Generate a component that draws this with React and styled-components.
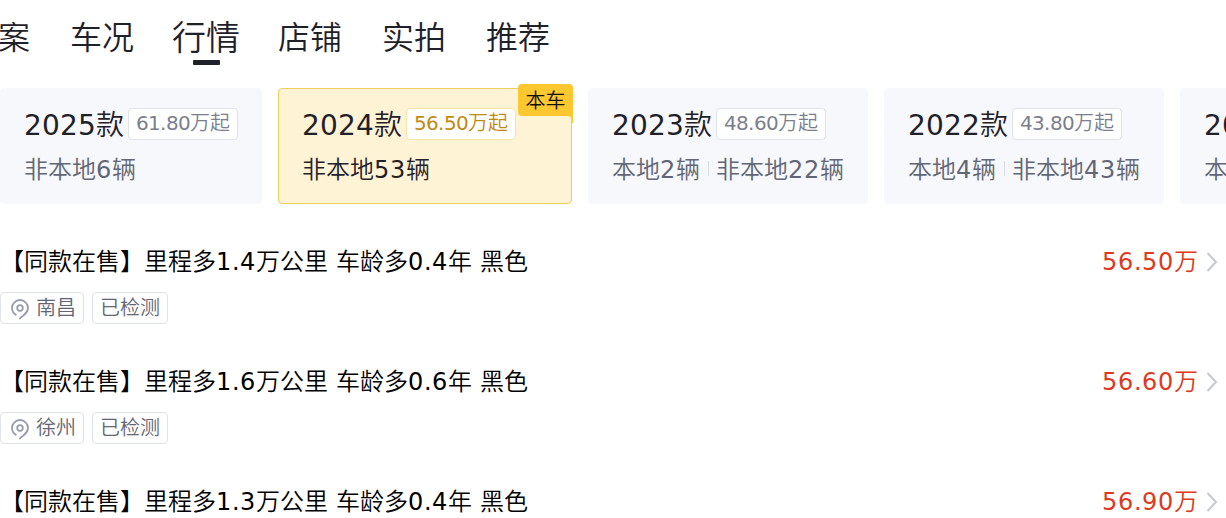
import React from "react";
import styled, { createGlobalStyle, css } from "styled-components";

const GlobalStyles = createGlobalStyle`
  * {
    box-sizing: border-box;
  }
  body {
    margin: 0;
    overflow: hidden;
    background: #fff;
    color: #1f2129;
    font-family: "DejaVu Sans", "Noto Sans CJK SC", sans-serif;
    font-weight: 350;
  }
`;

const PageStyles = styled.div`
  width: 100%;
  height: 518px;
  overflow: hidden;
`;

const TabBar = styled.nav`
  display: flex;
  gap: 40px;
  height: 88px;
  margin-left: -34px;
`;

const Tab = styled.div`
  flex-shrink: 0;
  display: flex;
  flex-direction: column;
  align-items: center;
  width: 64px;
  padding-top: 16px;
  font-size: 32px;
  line-height: 45px;
  white-space: nowrap;
  ${(props) =>
    props.$active &&
    css`
      font-size: 34px;
      &::after {
        content: "";
        width: 27px;
        height: 5px;
        margin-top: -1px;
        border-radius: 1px;
        background: #1f2129;
      }
    `}
`;

const YearList = styled.div`
  display: flex;
  gap: 16px;
`;

const YearCard = styled.div`
  position: relative;
  flex-shrink: 0;
  height: 116px;
  padding: 20px 24px 0;
  border-radius: 4px;
  background: #f6f8fc;
  color: #626675;
  ${(props) =>
    props.$current &&
    css`
      padding: 19px 55px 0 23px;
      border: 1px solid #edcf5c;
      background: #fff3d6;
      color: #1f2129;
    `}
`;

const YearHead = styled.div`
  display: flex;
  gap: 4px;
  height: 34px;
`;

const YearTitle = styled.div`
  color: #1f2129;
  font-size: 28px;
  line-height: 36px;
  white-space: nowrap;
`;

const PriceTag = styled.div`
  height: 32px;
  padding: 0 7px;
  border: 1px solid ${(props) => (props.$current ? "#f5e3a8" : "#dfe2ea")};
  border-radius: 4px;
  background: #fff;
  color: ${(props) => (props.$current ? "#c18a13" : "#7b7f8d")};
  font-size: 20px;
  line-height: 28px;
  white-space: nowrap;
`;

const YearCounts = styled.div`
  display: flex;
  align-items: center;
  margin-top: 11px;
  font-size: 24px;
  line-height: 34px;
  white-space: nowrap;
`;

const Divider = styled.i`
  width: 1px;
  height: 15px;
  margin: 0 7px 4px 8px;
  background: #d9dce3;
`;

const Corner = styled.div`
  position: absolute;
  top: -5px;
  right: -2px;
  width: 55px;
  height: 32px;
  border-radius: 4px 4px 0 4px;
  background: #fdc72f;
  color: #111;
  font-size: 20px;
  line-height: 34px;
  text-align: center;
  svg {
    position: absolute;
    top: 32px;
    right: 0;
  }
`;

const CarRow = styled.div`
  height: 120px;
`;

const CarHead = styled.div`
  display: flex;
  align-items: center;
  height: 36px;
  padding-right: 7px;
  color: #000;
  font-size: 24px;
  line-height: 36px;
  white-space: nowrap;
`;

const CarPrice = styled.div`
  margin-left: auto;
  margin-right: 8px;
  color: #dc3b20;
`;

const TagList = styled.div`
  display: flex;
  gap: 8px;
  margin-top: 12px;
`;

const Tag = styled.div`
  display: flex;
  align-items: center;
  height: 32px;
  padding: 0 7px;
  border: 1px solid #dfe2ea;
  border-radius: 4px;
  color: #626675;
  font-size: 20px;
  line-height: 30px;
  svg {
    margin: 2px 7px 0 3px;
  }
`;

const CarList = styled.div`
  padding-top: 40px;
`;

const Digits = styled.span`
  font-weight: 400;
  letter-spacing: ${(props) => props.$gap}px;
`;

// advance corrections for digits and for dots/spaces, keyed by font size
const GAPS = {
  20: [-0.727, -0.357],
  24: [0.73, 0.37],
  28: [0.185, 0],
};

const Text = ({ size, children }) =>
  children.split(/(\d+|[. ])/).map((part, index) => {
    if (!/^[\d. ]/.test(part)) return part;
    const gap = GAPS[size][/\d/.test(part) ? 0 : 1];
    return (
      <Digits key={index} $gap={gap}>
        {part}
      </Digits>
    );
  });

const PinIcon = () => (
  <svg width="18" height="21" viewBox="0 0 18 21" fill="none" stroke="#989caa">
    <path d="M5.4 16.3C2.8 14.7 1 12.2 1 9a8 8 0 0 1 16 0c0 4.2-3.2 6.2-8.8 11" strokeWidth="1.8" />
    <circle cx="9" cy="9" r="2.8" strokeWidth="1.8" />
  </svg>
);

const ArrowIcon = () => (
  <svg width="13" height="22" viewBox="0 0 13 22" fill="none">
    <path d="M1.5 2L10 11L1.5 20" stroke="#c5c8d0" strokeWidth="2" />
  </svg>
);

const tabs = ["档案", "车况", "行情", "店铺", "实拍", "推荐"];

const years = [
  { year: "2025款", price: "61.80万起", counts: ["非本地6辆"] },
  { year: "2024款", price: "56.50万起", counts: ["非本地53辆"], current: true },
  { year: "2023款", price: "48.60万起", counts: ["本地2辆", "非本地22辆"] },
  { year: "2022款", price: "43.80万起", counts: ["本地4辆", "非本地43辆"] },
  { year: "2021款", price: "39.80万起", counts: ["本地2辆", "非本地30辆"] },
];

const cars = [
  { title: "【同款在售】里程多1.4万公里 车龄多0.4年 黑色", price: "56.50万", city: "南昌" },
  { title: "【同款在售】里程多1.6万公里 车龄多0.6年 黑色", price: "56.60万", city: "徐州" },
  { title: "【同款在售】里程多1.3万公里 车龄多0.4年 黑色", price: "56.90万" },
];

const YearItem = ({ data }) => {
  const { year, price, counts, current } = data;
  return (
    <YearCard $current={current}>
      <YearHead>
        <YearTitle>
          <Text size={28}>{year}</Text>
        </YearTitle>
        <PriceTag $current={current}>
          <Text size={20}>{price}</Text>
        </PriceTag>
      </YearHead>
      <YearCounts>
        {counts.map((count, index) => (
          <React.Fragment key={count}>
            {index > 0 && <Divider />}
            <span>
              <Text size={24}>{count}</Text>
            </span>
          </React.Fragment>
        ))}
      </YearCounts>
      {current && (
        <Corner>
          本车
          <svg width="6" height="7" viewBox="0 0 6 7">
            <path d="M0 0H6V7H5V4Q5 0 0 0Z" fill="#fdc72f" />
          </svg>
        </Corner>
      )}
    </YearCard>
  );
};

const CarItem = ({ data }) => (
  <CarRow>
    <CarHead>
      <span>
        <Text size={24}>{data.title}</Text>
      </span>
      <CarPrice>
        <Text size={24}>{data.price}</Text>
      </CarPrice>
      <ArrowIcon />
    </CarHead>
    {data.city && (
      <TagList>
        <Tag>
          <PinIcon />
          {data.city}
        </Tag>
        <Tag>已检测</Tag>
      </TagList>
    )}
  </CarRow>
);

const App = () => (
  <PageStyles>
    <GlobalStyles />
    <TabBar>
      {tabs.map((tab) => (
        <Tab key={tab} $active={tab === "行情"}>
          {tab}
        </Tab>
      ))}
    </TabBar>
    <YearList>
      {years.map((item) => (
        <YearItem key={item.year} data={item} />
      ))}
    </YearList>
    <CarList>
      {cars.map((item) => (
        <CarItem key={item.title} data={item} />
      ))}
    </CarList>
  </PageStyles>
);

export default App;
